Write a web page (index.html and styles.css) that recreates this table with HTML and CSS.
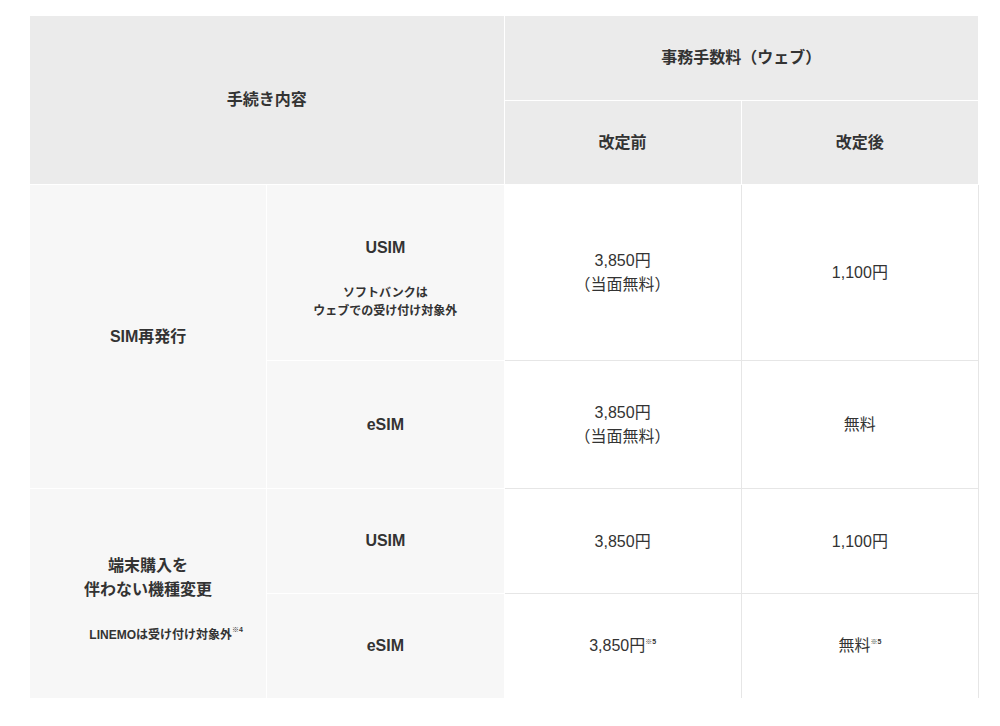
FILE: index.html
```html
<!DOCTYPE html>
<html lang="ja">
<head>
<meta charset="utf-8">
<title>事務手数料</title>
<link rel="stylesheet" href="styles.css">
</head>
<body>
<table class="fee-table">
  <colgroup>
    <col class="col"><col class="col"><col class="col"><col class="col">
  </colgroup>
  <thead>
    <tr>
      <th class="head" colspan="2" rowspan="2">手続き内容</th>
      <th class="head" colspan="2">事務手数料（ウェブ）</th>
    </tr>
    <tr>
      <th class="head sub">改定前</th>
      <th class="head sub">改定後</th>
    </tr>
  </thead>
  <tbody>
    <tr>
      <th class="rowhead" rowspan="2"><span class="label">SIM再発行</span></th>
      <th class="rowhead has-note"><span class="label">USIM</span><p class="note">ソフトバンクは<br>ウェブでの受け付け対象外</p></th>
      <td class="val">3,850円<br>（当面無料）</td>
      <td class="val">1,100円</td>
    </tr>
    <tr>
      <th class="rowhead"><span class="label">eSIM</span></th>
      <td class="val">3,850円<br>（当面無料）</td>
      <td class="val">無料</td>
    </tr>
    <tr>
      <th class="rowhead has-note last" rowspan="2"><span class="label">端末購入を<br>伴わない機種変更</span><p class="note note-shift">LINEMOは受け付け対象外<sup class="ref">※4</sup></p></th>
      <th class="rowhead"><span class="label">USIM</span></th>
      <td class="val">3,850円</td>
      <td class="val">1,100円</td>
    </tr>
    <tr class="last-row">
      <th class="rowhead last"><span class="label">eSIM</span></th>
      <td class="val last">3,850円<sup class="ref">※5</sup></td>
      <td class="val last">無料<sup class="ref">※5</sup></td>
    </tr>
  </tbody>
</table>
</body>
</html>
```

FILE: styles.css
```css
html, body {
  margin: 0;
  padding: 0;
  background: #fff;
}

body {
  font-family: "Liberation Sans", "Noto Sans CJK JP", sans-serif;
  color: #333;
}

.fee-table {
  margin: 16px 0 0 30px;
  width: 949px;
  table-layout: fixed;
  border-collapse: separate;
  border-spacing: 0;
}

.col {
  width: 25%;
}

.fee-table th,
.fee-table td {
  text-align: center;
  vertical-align: middle;
  font-size: 16px;
  line-height: 24px;
  border-right: 1px solid #fff;
  border-bottom: 1px solid #fff;
}

.head {
  background: #ebebeb;
  font-weight: 700;
  padding: 30px 8px 30px;
}

.head.sub {
  padding-bottom: 29px;
}

.rowhead {
  background: #f7f7f7;
  font-weight: 700;
  padding: 40px 8px;
}

.rowhead.has-note {
  padding-top: 51px;
}

.label {
  display: block;
}

.note {
  margin: 24px 0 0;
  font-size: 12px;
  line-height: 18px;
  font-weight: 700;
}

.note-shift {
  padding-left: 36px;
}

.fee-table .val {
  background: #fff;
  font-weight: 400;
  padding: 40px 8px 39px;
  border-right-color: #e6e6e6;
  border-bottom-color: #e6e6e6;
}

.fee-table .last {
  border-bottom: none;
}

.fee-table .val.last {
  padding-bottom: 40px;
}

.ref {
  font-size: 7px;
  line-height: 0;
  vertical-align: 7px;
  font-weight: 700;
  color: #333;
}
```
